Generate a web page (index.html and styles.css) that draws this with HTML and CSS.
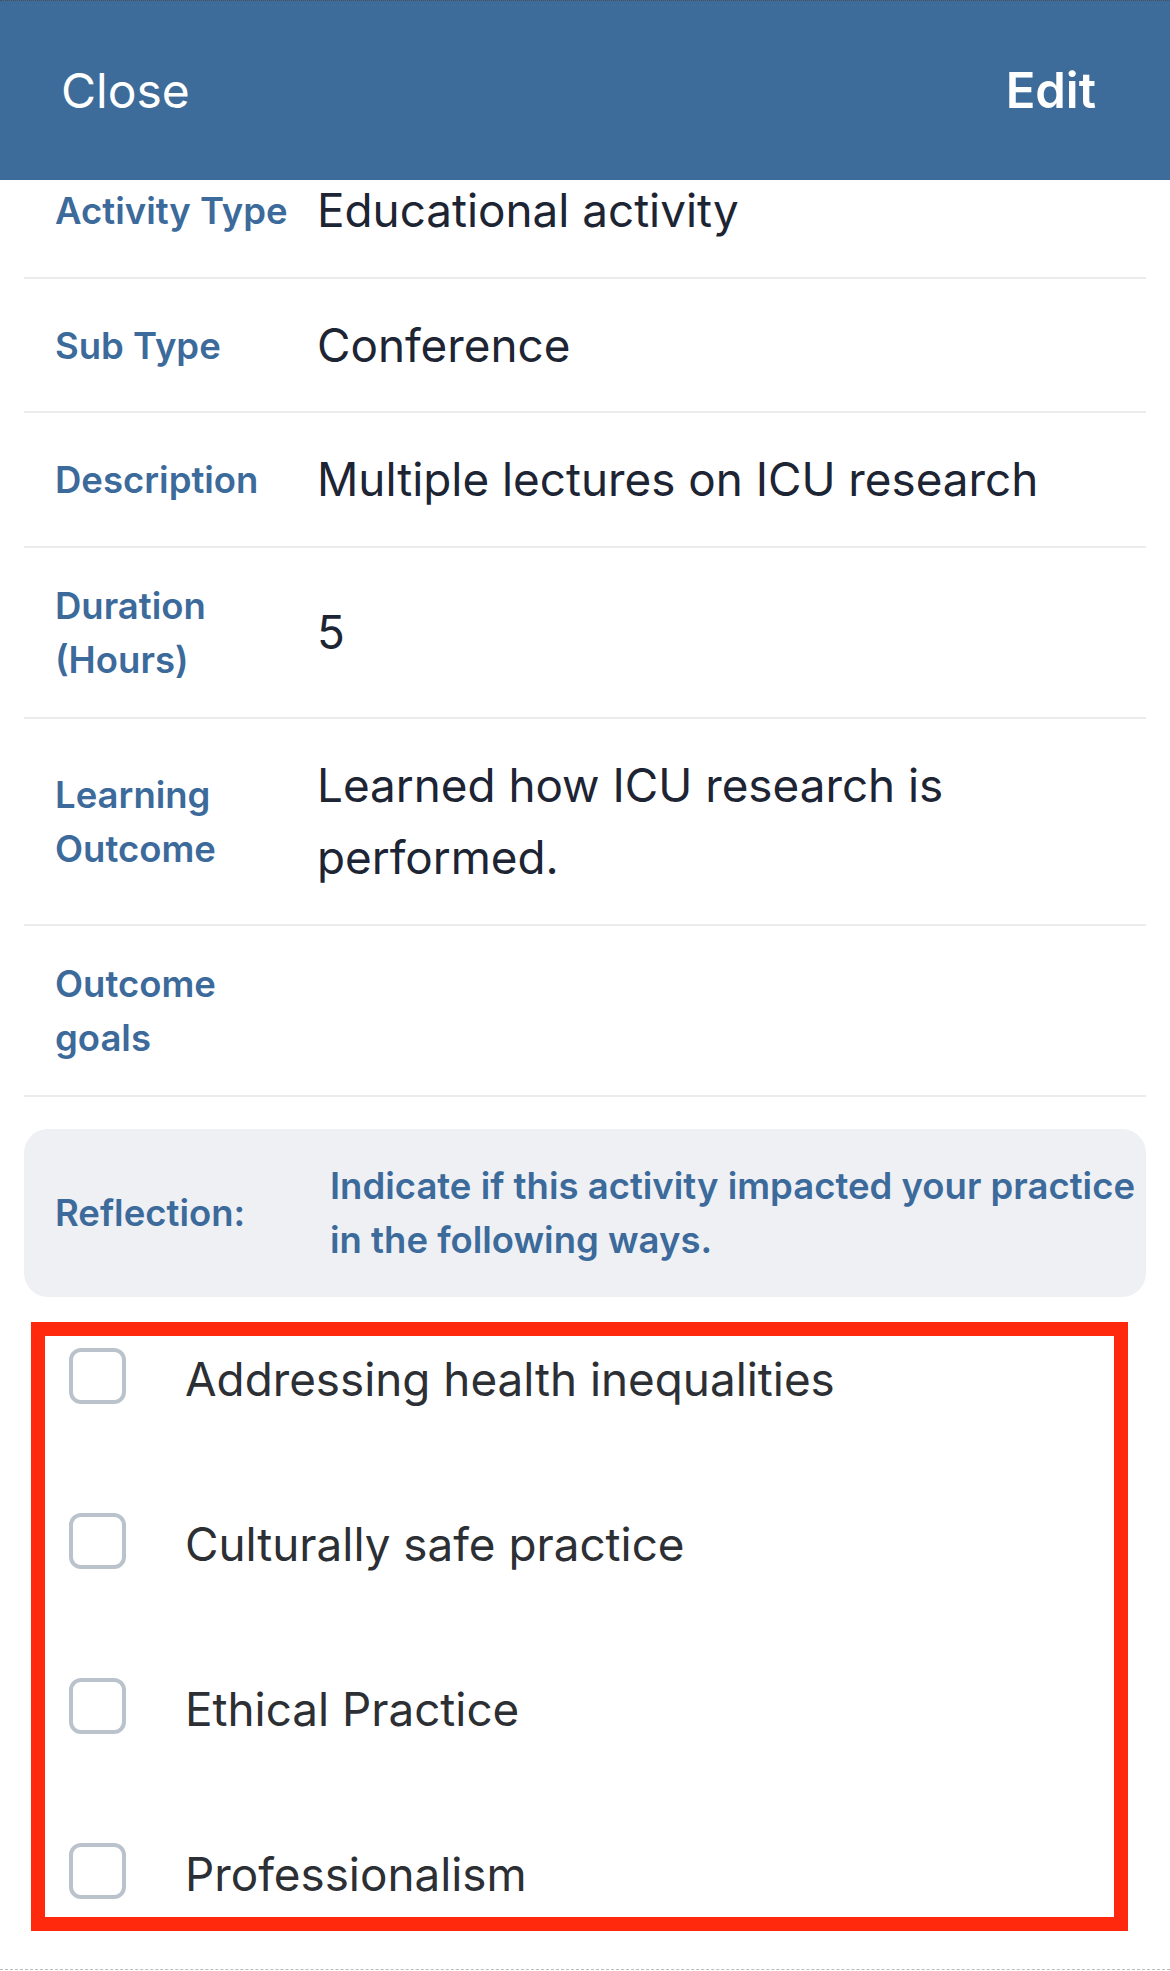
FILE: index.html
```html
<!DOCTYPE html>
<html lang="en">
<head>
<meta charset="utf-8">
<title>Activity</title>
<link rel="stylesheet" href="styles.css">
</head>
<body>
<header class="topbar">
  <span class="nav-btn">Close</span>
  <span class="nav-btn nav-edit">Edit</span>
</header>
<main class="viewport">
  <div class="scroller">
    <section class="details">
      <div class="row">
        <div class="label">Activity Type</div>
        <div class="value">Educational activity</div>
      </div>
      <div class="row">
        <div class="label">Sub Type</div>
        <div class="value">Conference</div>
      </div>
      <div class="row">
        <div class="label">Description</div>
        <div class="value">Multiple lectures on ICU research</div>
      </div>
      <div class="row">
        <div class="label">Duration<br>(Hours)</div>
        <div class="value">5</div>
      </div>
      <div class="row">
        <div class="label">Learning<br>Outcome</div>
        <div class="value">Learned how ICU research is<br>performed.</div>
      </div>
      <div class="row">
        <div class="label">Outcome<br>goals</div>
        <div class="value"></div>
      </div>
    </section>

    <section class="reflection">
      <div class="reflection-title">Reflection:</div>
      <div class="reflection-text">Indicate if this activity impacted your practice<br>in the following ways.</div>
    </section>

    <section class="highlight">
      <label class="check-item"><span class="checkbox"></span><span class="check-text">Addressing health inequalities</span></label>
      <label class="check-item"><span class="checkbox"></span><span class="check-text">Culturally safe practice</span></label>
      <label class="check-item"><span class="checkbox"></span><span class="check-text">Ethical Practice</span></label>
      <label class="check-item"><span class="checkbox"></span><span class="check-text">Professionalism</span></label>
    </section>

    <div class="bottom-edge"></div>
  </div>
</main>
</body>
</html>
```

FILE: styles.css
```css
* { box-sizing: border-box; }

html, body {
  margin: 0;
  padding: 0;
  background: #ffffff;
}

body {
  width: 1170px;
  height: 1971px;
  overflow: hidden;
  font-family: "Inter", "Liberation Sans", sans-serif;
  display: flex;
  flex-direction: column;
}

.topbar {
  height: 180px;
  flex: 0 0 180px;
  background: #3d6b9a;
  border-top: 1px dotted #4b4f55;
  display: flex;
  align-items: center;
  justify-content: space-between;
  padding: 0 74px 0 61px;
  color: #ffffff;
  position: relative;
  z-index: 2;
}

.nav-btn {
  font-size: 48px;
  font-weight: 400;
  line-height: 1;
}

.nav-edit {
  font-size: 49px;
  font-weight: 600;
}

.viewport {
  flex: 1 1 auto;
  overflow: hidden;
}

.scroller {
  margin-top: -36px;
}

.details {
  padding: 0 24px;
}

.row {
  display: grid;
  grid-template-columns: 262px 1fr;
  align-items: center;
  padding: 31px 0 29px 31px;
  border-bottom: 2px solid #ebebee;
}

.label {
  font-size: 36.5px;
  font-weight: 600;
  line-height: 54.5px;
  color: #3b6a9b;
}

.value {
  font-size: 45.8px;
  font-weight: 400;
  line-height: 72.5px;
  color: #1d2433;
}

.reflection {
  margin: 32px 24px 0;
  height: 168px;
  border-radius: 24px;
  background: #eff0f4;
  display: grid;
  grid-template-columns: 275px 1fr;
  align-items: center;
  padding: 0 0 0 31px;
}

.reflection-title,
.reflection-text {
  font-size: 36.5px;
  font-weight: 600;
  line-height: 54px;
  color: #3b6a9b;
}

.reflection-text {
  white-space: nowrap;
}

.highlight {
  margin: 25px 42px 0 31px;
  border: 14px solid #ff2a0d;
  padding: 12px 0 18px 24px;
  display: flex;
  flex-direction: column;
  gap: 109px;
}

.check-item {
  display: flex;
  align-items: center;
  gap: 59px;
  height: 56px;
}

.checkbox {
  width: 57px;
  height: 56px;
  flex: 0 0 57px;
  border: 4px solid #bac3cc;
  border-radius: 12px;
  background: #ffffff;
}

.check-text {
  font-size: 45.8px;
  font-weight: 400;
  line-height: 56px;
  color: #2c2f34;
  padding-top: 9px;
}

.bottom-edge {
  margin-top: 38px;
  border-top: 1px dashed #b8bcc3;
}
```
